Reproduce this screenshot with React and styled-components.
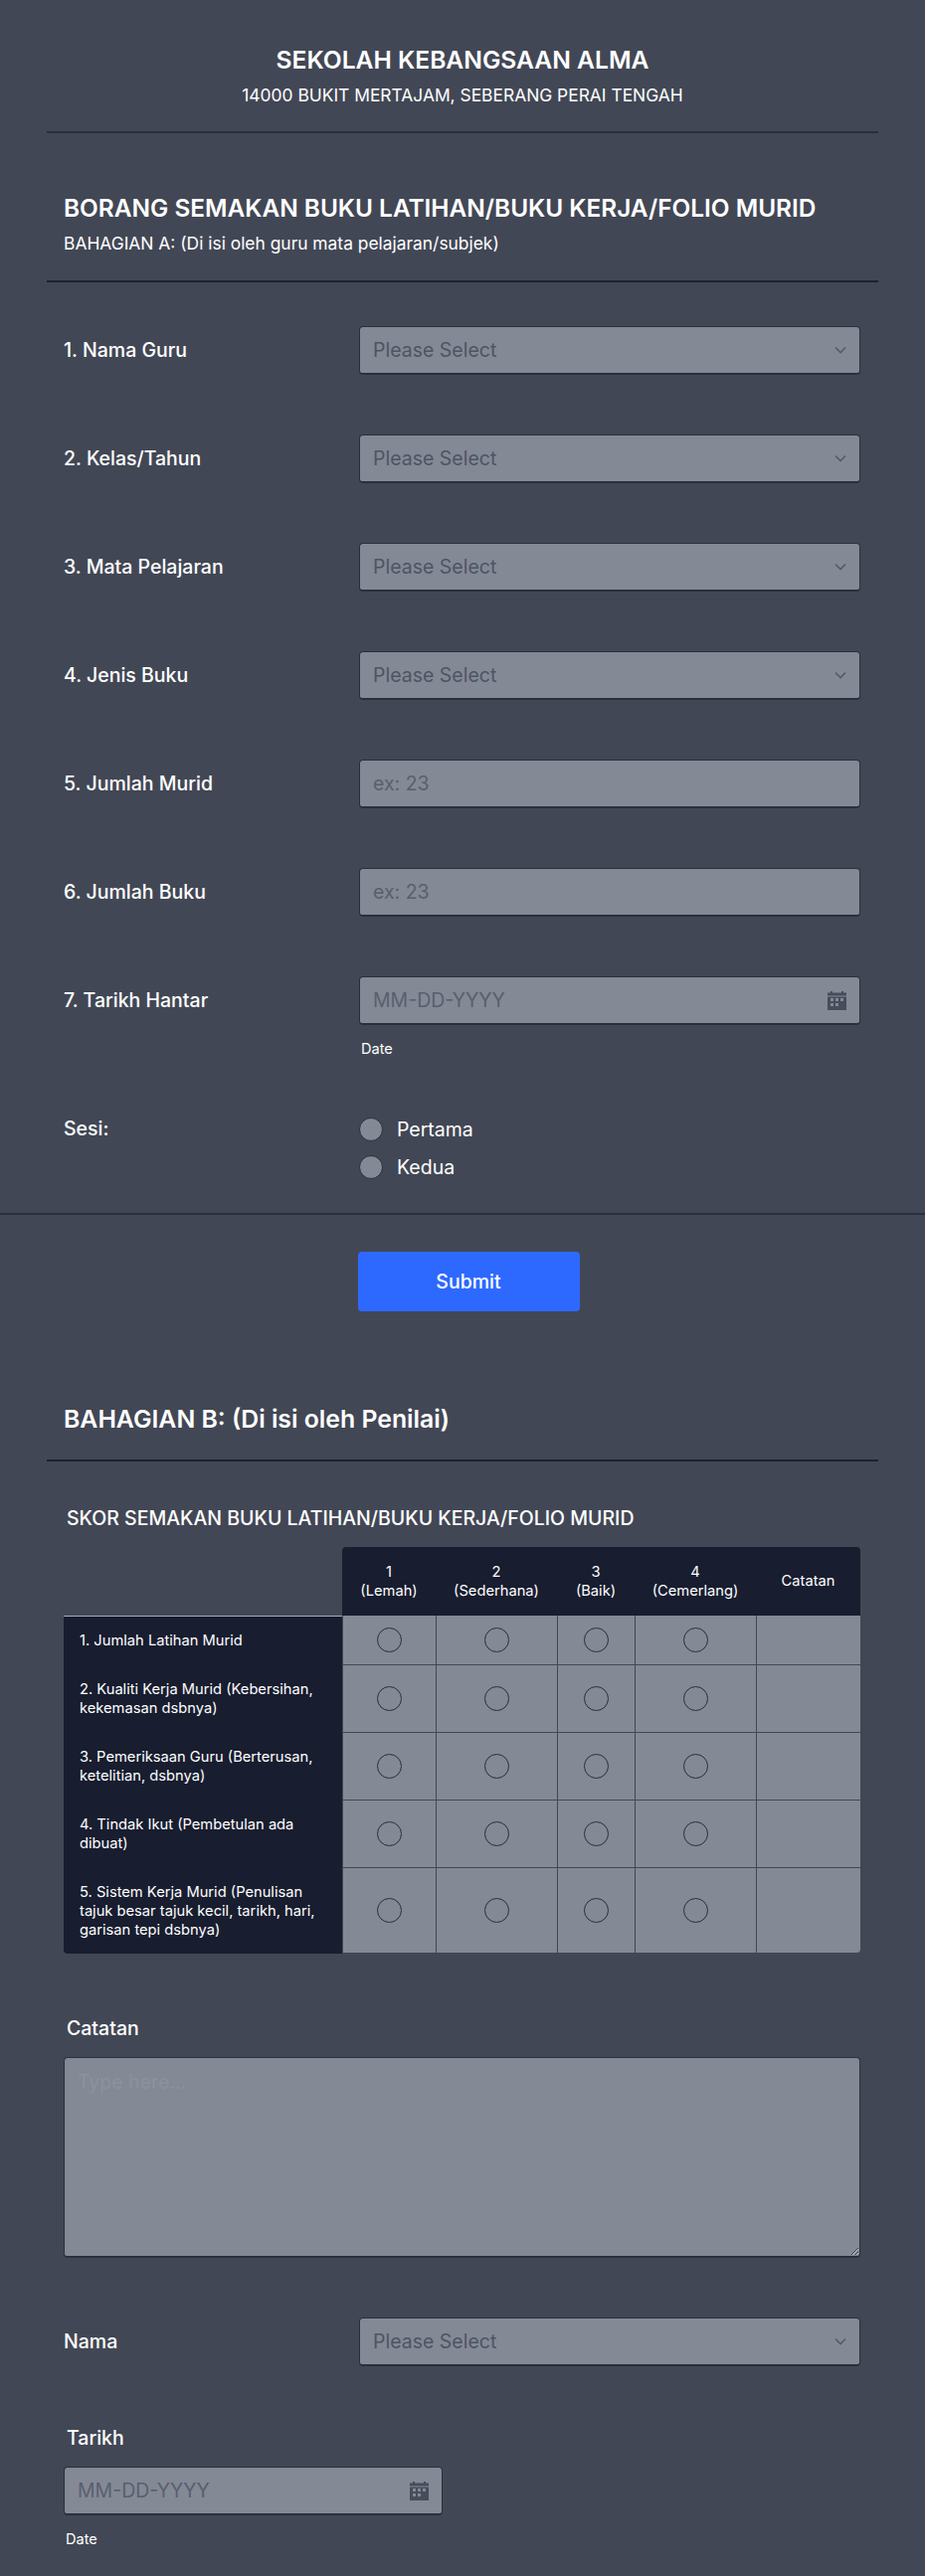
import React from 'react';
import styled, { createGlobalStyle } from 'styled-components';

const GlobalStyle = createGlobalStyle`
    * { box-sizing: border-box; }
    html, body { margin: 0; padding: 0; background: #424755; }
    body { font-family: Inter, "Liberation Sans", sans-serif; color: #fff; }
`;

const selectRows = ['1. Nama Guru', '2. Kelas/Tahun', '3. Mata Pelajaran', '4. Jenis Buku'];
const numberRows = ['5. Jumlah Murid', '6. Jumlah Buku'];
const columns = [
    { top: '1', bottom: '(Lemah)', width: 94 },
    { top: '2', bottom: '(Sederhana)', width: 122 },
    { top: '3', bottom: '(Baik)', width: 78 },
    { top: '4', bottom: '(Cemerlang)', width: 122 },
];
const scoreRows = [
    { label: '1. Jumlah Latihan Murid', height: 50 },
    { label: '2. Kualiti Kerja Murid (Kebersihan, kekemasan dsbnya)', height: 68 },
    { label: '3. Pemeriksaan Guru (Berterusan, ketelitian, dsbnya)', height: 68 },
    { label: '4. Tindak Ikut (Pembetulan ada dibuat)', height: 68 },
    { label: '5. Sistem Kerja Murid (Penulisan tajuk besar tajuk kecil, tarikh, hari, garisan tepi dsbnya)', height: 86 },
];

function ChevronIcon() {
    return (
        <svg width="12" height="8" viewBox="0 0 12 8" fill="none">
            <path d="M1 1.5 L6 6.5 L11 1.5" stroke="#555a6a" strokeWidth="1.6" />
        </svg>
    );
}

function CalendarIcon() {
    return (
        <svg width="19" height="19" viewBox="0 0 19 19">
            <path fill="#484d5c" d="M3 0h2v1.5h9V0h2v1.5h3V19H0V1.5h3z" />
            <g fill="#848996">
                <rect x="0" y="4.5" width="19" height="1" />
                <rect x="3" y="7" width="3" height="3" />
                <rect x="8" y="7" width="3" height="3" />
                <rect x="13" y="7" width="3" height="3" />
                <rect x="3" y="12" width="3" height="3" />
                <rect x="8" y="12" width="3" height="3" />
            </g>
        </svg>
    );
}

function SelectField() {
    return (
        <FieldBox>
            <FieldText>Please Select</FieldText>
            <ChevronIcon />
        </FieldBox>
    );
}

function DateField({ compact }) {
    return (
        <FieldBox $compact={compact}>
            <FieldInput placeholder="MM-DD-YYYY" readOnly />
            <CalendarIcon />
        </FieldBox>
    );
}

function App() {
    return (
        <Page>
            <GlobalStyle />
            <SchoolHeader>
                <SchoolName>SEKOLAH KEBANGSAAN ALMA</SchoolName>
                <SchoolAddress>14000 BUKIT MERTAJAM, SEBERANG PERAI TENGAH</SchoolAddress>
            </SchoolHeader>

            <FormHeader>
                <FormTitle>BORANG SEMAKAN BUKU LATIHAN/BUKU KERJA/FOLIO MURID</FormTitle>
                <FormSubtitle>BAHAGIAN A: (Di isi oleh guru mata pelajaran/subjek)</FormSubtitle>
            </FormHeader>

            <FormLines>
                {selectRows.map(label => (
                    <FieldRow key={label}>
                        <RowLabel>{label}</RowLabel>
                        <SelectField />
                    </FieldRow>
                ))}
                {numberRows.map(label => (
                    <FieldRow key={label}>
                        <RowLabel>{label}</RowLabel>
                        <FieldBox>
                            <FieldInput placeholder="ex: 23" readOnly />
                        </FieldBox>
                    </FieldRow>
                ))}
                <FieldRow>
                    <RowLabel>7. Tarikh Hantar</RowLabel>
                    <div>
                        <DateField />
                        <SubLabel>Date</SubLabel>
                    </div>
                </FieldRow>
                <SessionRow>
                    <SessionLabel>Sesi:</SessionLabel>
                    <RadioList>
                        <RadioItem><RadioInput type="radio" name="sesi" />Pertama</RadioItem>
                        <RadioItem><RadioInput type="radio" name="sesi" />Kedua</RadioItem>
                    </RadioList>
                </SessionRow>
            </FormLines>

            <SubmitBar>
                <SubmitButton type="button">Submit</SubmitButton>
            </SubmitBar>

            <SectionHeader>
                <SectionTitle>BAHAGIAN B: (Di isi oleh Penilai)</SectionTitle>
            </SectionHeader>

            <TableBlock>
                <BlockLabel>SKOR SEMAKAN BUKU LATIHAN/BUKU KERJA/FOLIO MURID</BlockLabel>
                <ScoreTable>
                    <thead>
                        <tr>
                            <CornerCell />
                            {columns.map(col => (
                                <HeadCell key={col.top} style={{ width: col.width }}>
                                    {col.top}<br />{col.bottom}
                                </HeadCell>
                            ))}
                            <HeadCell $last>Catatan</HeadCell>
                        </tr>
                    </thead>
                    <tbody>
                        {scoreRows.map((row, i) => (
                            <tr key={row.label} style={{ height: row.height }}>
                                <RowHead $first={i === 0} $last={i === scoreRows.length - 1}>{row.label}</RowHead>
                                {columns.map(col => (
                                    <ScoreCell key={col.top}><Circle /></ScoreCell>
                                ))}
                                <ScoreCell $corner={i === scoreRows.length - 1} />
                            </tr>
                        ))}
                    </tbody>
                </ScoreTable>
            </TableBlock>

            <NotesBlock>
                <BlockLabel>Catatan</BlockLabel>
                <NotesArea placeholder="Type here..." readOnly />
            </NotesBlock>

            <NameRow>
                <RowLabel>Nama</RowLabel>
                <SelectField />
            </NameRow>

            <DateBlock>
                <BlockLabel>Tarikh</BlockLabel>
                <DateInputWrap>
                    <DateField compact />
                </DateInputWrap>
                <SubLabel>Date</SubLabel>
            </DateBlock>
        </Page>
    );
}

export default App;


const Page = styled.div`
    width: 930px;
    height: 2591px;
    overflow: hidden;
    background-color: #424755;
`

const SchoolHeader = styled.div`
    height: 134px;
    margin: 0 47px;
    padding-top: 44px;
    text-align: center;
    border-bottom: 2px solid #2b2f3d;
`

const SchoolName = styled.h1`
    margin: 0;
    font-size: 24.6px;
    line-height: 32px;
    font-weight: 600;
    color: #fff;
`

const SchoolAddress = styled.p`
    margin: 8px 0 0;
    font-size: 17.4px;
    line-height: 24px;
    font-weight: 400;
    color: #fff;
`

const FormHeader = styled.div`
    height: 150px;
    margin: 0 47px;
    padding: 59px 17px 0;
    border-bottom: 2px solid #1e2230;
`

const FormTitle = styled.h2`
    margin: 0;
    font-size: 24.4px;
    line-height: 32px;
    font-weight: 600;
    color: #fff;
    white-space: nowrap;
`

const FormSubtitle = styled.p`
    margin: 8px 0 0;
    font-size: 17.4px;
    line-height: 24px;
    color: #fff;
`

const FormLines = styled.div`
    display: flex;
    flex-direction: column;
    padding: 44px 65px 0 64px;
    gap: 60px;
`

const FieldRow = styled.div`
    display: grid;
    grid-template-columns: 297px 504px;
    align-items: start;
`

const SessionRow = styled(FieldRow)`
    margin-top: -4px;
`

const RowLabel = styled.label`
    font-size: 19.5px;
    line-height: 49px;
    font-weight: 500;
    color: #fff;
`

const SessionLabel = styled(RowLabel)`
    line-height: 29px;
`

const FieldBox = styled.div`
    display: flex;
    align-items: center;
    justify-content: space-between;
    width: ${props => (props.$compact ? '381px' : '100%')};
    height: 49px;
    padding: 0 13px;
    background-color: #848996;
    border: 1px solid #2b2f3d;
    border-bottom-width: 2px;
    border-radius: 4px;
`

const FieldText = styled.div`
    font-size: 19.5px;
    color: #4f5464;
`

const FieldInput = styled.input`
    flex: 1;
    min-width: 0;
    padding: 0;
    border: 0;
    outline: 0;
    background: transparent;
    font-family: inherit;
    font-size: 19.5px;
    color: #4f5464;
    &::placeholder {
        color: #5a5f6e;
        opacity: 1;
    }
`

const SubLabel = styled.div`
    margin-top: 14px;
    padding-left: 2px;
    font-size: 14.6px;
    line-height: 20px;
    color: #fff;
`

const DateInputWrap = styled.div`
    margin-top: 15px;
`

const RadioList = styled.div`
    display: flex;
    flex-direction: column;
    gap: 15px;
    padding-top: 3px;
`

const RadioItem = styled.label`
    display: flex;
    align-items: center;
    gap: 14px;
    height: 23px;
    font-size: 19.5px;
    color: #fff;
`

const RadioInput = styled.input`
    appearance: none;
    width: 24px;
    height: 24px;
    margin: 0;
    background-color: #848996;
    border: 1px solid #2b2f3d;
    border-radius: 50%;
`

const SubmitBar = styled.div`
    display: flex;
    justify-content: center;
    margin-top: 35px;
    padding: 37px 0 0 12px;
    border-top: 2px solid #2b2f3d;
`

const SubmitButton = styled.button`
    width: 223px;
    height: 60px;
    border: 0;
    border-radius: 4px;
    background-color: #2e69ff;
    color: #fff;
    font-family: inherit;
    font-size: 19.5px;
    font-weight: 500;
`

const SectionHeader = styled.div`
    height: 151px;
    margin: 0 47px;
    padding: 92px 17px 0;
    border-bottom: 2px solid #1e2230;
`

const SectionTitle = styled.h2`
    margin: 0;
    font-size: 24.8px;
    line-height: 32px;
    font-weight: 600;
    color: #fff;
`

const BlockLabel = styled.div`
    padding-left: 3px;
    font-size: 19.5px;
    line-height: 28px;
    font-weight: 500;
    color: #fff;
`

const TableBlock = styled.div`
    padding: 43px 65px 0 64px;
`

const ScoreTable = styled.table`
    width: 801px;
    margin-top: 15px;
    border-collapse: separate;
    border-spacing: 0;
    table-layout: fixed;
`

const CornerCell = styled.th`
    width: 280px;
    height: 69px;
    padding: 0;
`

const HeadCell = styled.th`
    padding: 0;
    background-color: #181d2f;
    font-size: 14.7px;
    line-height: 19px;
    font-weight: 400;
    text-align: center;
    color: #fff;
    border-top-right-radius: ${props => (props.$last ? '4px' : '0')};
    &:nth-child(2) {
        border-top-left-radius: 4px;
    }
`

const RowHead = styled.th`
    padding: 0 16px;
    background-color: #181d2f;
    border-top: ${props => (props.$first ? '1px solid #a9adb8' : '0')};
    border-bottom-left-radius: ${props => (props.$last ? '4px' : '0')};
    font-size: 14.7px;
    line-height: 19px;
    font-weight: 400;
    text-align: left;
    color: #fff;
`

const ScoreCell = styled.td`
    padding: 0;
    text-align: center;
    vertical-align: middle;
    background-color: #848996;
    border-left: 1px solid #424755;
    border-bottom: 1px solid #424755;
    border-bottom-right-radius: ${props => (props.$corner ? '4px' : '0')};
`

const Circle = styled.span`
    display: block;
    width: 25px;
    height: 25px;
    margin: 0 auto;
    border: 1.5px solid #2b2f3d;
    border-radius: 50%;
`

const NotesBlock = styled.div`
    padding: 61px 65px 0 64px;
`

const NotesArea = styled.textarea`
    display: block;
    width: 801px;
    height: 202px;
    margin-top: 15px;
    padding: 12px 13px;
    background-color: #848996;
    border: 1px solid #2b2f3d;
    border-bottom-width: 2px;
    border-radius: 4px;
    outline: 0;
    resize: both;
    font-family: inherit;
    font-size: 19.5px;
    &::placeholder {
        color: #8d929e;
        opacity: 1;
    }
`

const NameRow = styled(FieldRow)`
    padding: 60px 65px 0 64px;
`

const DateBlock = styled.div`
    padding: 58px 65px 0 64px;
`
